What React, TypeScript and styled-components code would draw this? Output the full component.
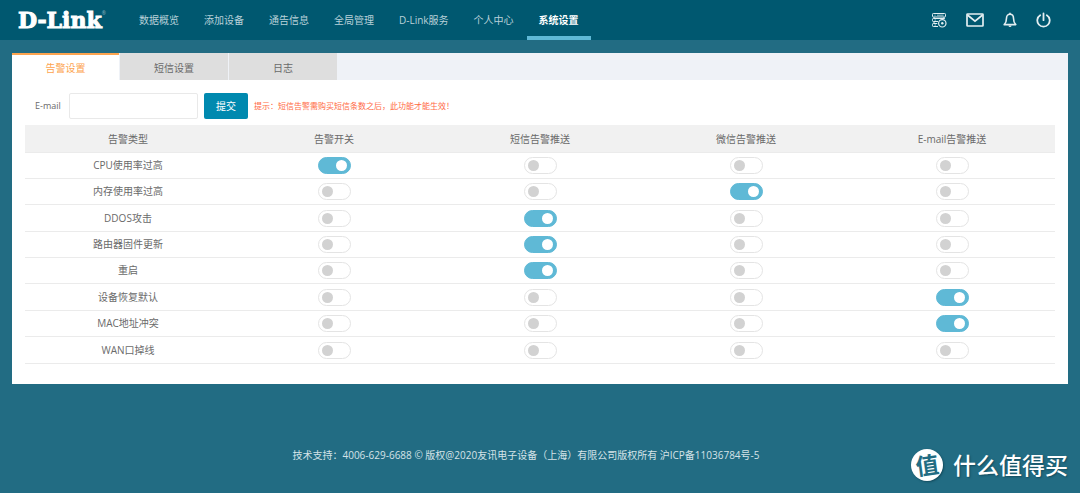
import React, { useState } from "react";
import styled, { createGlobalStyle } from "styled-components";

const GlobalStyle = createGlobalStyle`
  *, *::before, *::after { box-sizing: border-box; }
  body {
    margin: 0;
    background: #226c83;
    color: #6a6a6a;
    font-family: "Open Sans", "Noto Sans CJK SC", sans-serif;
    font-size: 10px;
    line-height: 14px;
  }
  button, input { font: inherit; }
`;

const Page = styled.div`
  display: flex;
  flex-direction: column;
  min-height: 100vh;
`;

const Header = styled.header`
  display: flex;
  align-items: stretch;
  height: 40px;
  padding: 0 29px 0 18px;
  background: #005870;
`;

const Logo = styled.a`
  display: flex;
  align-items: center;
  width: 109px;
  color: #fff;
  font-family: "DejaVu Serif", serif;
  font-size: 22px;
  font-weight: 700;
  line-height: 40px;
  text-decoration: none;
  white-space: nowrap;
  -webkit-text-stroke: 1px #fff;
`;

const Registered = styled.sup`
  align-self: flex-start;
  padding-top: 10px;
  font-family: "Open Sans", sans-serif;
  font-size: 5px;
  font-weight: 400;
  line-height: 6px;
  color: #8fb5c0;
  -webkit-text-stroke: 0;
`;

const Nav = styled.nav`
  display: flex;
  flex: 1;
  gap: 1px;
`;

const NavLink = styled.a<{ $active?: boolean }>`
  padding: 0 12px;
  border-bottom: 4px solid ${(p) => (p.$active ? "#5fb9d6" : "transparent")};
  color: ${(p) => (p.$active ? "#fff" : "#b9d1d9")};
  font-weight: ${(p) => (p.$active ? 600 : 400)};
  line-height: 40px;
  text-decoration: none;
  white-space: nowrap;
`;

const Tools = styled.div`
  display: flex;
  align-items: center;
  gap: 19px;
`;

const ToolButton = styled.button`
  display: flex;
  padding: 0;
  border: 0;
  background: none;
  color: #e3eef1;
  cursor: pointer;
`;

const Panel = styled.main`
  margin: 13px 12px 0;
  padding-bottom: 20px;
  background: #fff;
`;

const Tabs = styled.div`
  display: flex;
  gap: 1px;
  height: 27px;
  background: #eff2f7;
`;

const Tab = styled.button<{ $active?: boolean }>`
  width: ${(p) => (p.$active ? 107 : 108)}px;
  padding: 0;
  border: 0;
  border-top: 2px solid ${(p) => (p.$active ? "#fda44f" : "#dedede")};
  background: ${(p) => (p.$active ? "#fff" : "#dedede")};
  color: ${(p) => (p.$active ? "#fda44f" : "#6a6a6a")};
  line-height: 24px;
  cursor: pointer;
`;

const EmailForm = styled.form`
  display: flex;
  align-items: center;
  padding: 13px 23px 6px;
`;

const EmailLabel = styled.label`
  width: 34px;
  font-size: 9px;
`;

const EmailInput = styled.input`
  width: 129px;
  height: 26px;
  padding: 0 6px;
  border: 1px solid #e9e9e9;
  border-radius: 2px;
  color: #6a6a6a;
`;

const Submit = styled.button`
  width: 44px;
  height: 26px;
  margin: 0 6px;
  padding: 0;
  border: 0;
  border-radius: 2px;
  background: #0089af;
  color: #fff;
  cursor: pointer;
`;

const Hint = styled.span`
  color: #ff6a45;
  font-size: 8px;
`;

const TableWrap = styled.div`
  padding: 0 13px;
`;

const Table = styled.table`
  width: 100%;
  table-layout: fixed;
  border-collapse: separate;
  border-spacing: 0;
  text-align: center;

  th, td {
    padding: 0;
    font-weight: 400;
    border-bottom: 1px solid #ebebeb;
    vertical-align: middle;
  }
  thead th {
    height: 28px;
    background: #f1f1f1;
  }
  tbody th { padding-bottom: 1px; }
  tbody tr { height: 26px; }
  tbody tr:nth-child(3n) { height: 27px; }
  tbody tr:last-child { height: 27px; }
`;

const Switch = styled.input`
  appearance: none;
  display: block;
  width: 33px;
  height: 17px;
  margin: 0 auto;
  border: 1px solid #e4e4e4;
  border-radius: 9px;
  background: #fff;
  cursor: pointer;

  &::before {
    content: "";
    display: block;
    width: 11px;
    height: 11px;
    margin: 2px 3px;
    border-radius: 50%;
    background: #d2d2d2;
  }
  &:checked {
    border-color: #5fb9d6;
    background: #5fb9d6;
  }
  &:checked::before {
    margin-left: 17px;
    background: #fff;
  }
`;

const Footer = styled.footer`
  padding: 64px 28px 0 0;
  color: #d5e3e8;
  text-align: center;
`;

const Watermark = styled.div`
  position: absolute;
  right: 12px;
  bottom: 11px;
  display: flex;
  align-items: center;
  gap: 10px;
  color: #fff;
  font-family: "Noto Sans CJK SC", sans-serif;
  font-size: 23px;
  font-weight: 500;
  line-height: 32px;
  text-shadow: 1px 1px 2px #134b5d;
`;

const WatermarkName = styled.span`
  padding-bottom: 2px;
`;

const Seal = styled.span`
  width: 32px;
  height: 32px;
  border-radius: 50%;
  background: #fff;
  box-shadow: 1px 1px 2px #134b5d;
  color: #226c83;
  font-weight: 700;
  line-height: 30px;
  text-align: center;
  text-shadow: none;
`;

const SealGlyph = styled.span`
  display: block;
  transform: rotate(-8deg);
`;

const NAV = ["数据概览", "添加设备", "通告信息", "全局管理", "D-Link服务", "个人中心", "系统设置"];
const TABS = ["告警设置", "短信设置", "日志"];
const COLUMNS = ["告警开关", "短信告警推送", "微信告警推送", "E-mail告警推送"];
const ALARMS: { name: string; on: number }[] = [
  { name: "CPU使用率过高", on: 0 },
  { name: "内存使用率过高", on: 2 },
  { name: "DDOS攻击", on: 1 },
  { name: "路由器固件更新", on: 1 },
  { name: "重启", on: 1 },
  { name: "设备恢复默认", on: 3 },
  { name: "MAC地址冲突", on: 3 },
  { name: "WAN口掉线", on: -1 },
];

const DevicesIcon = () => (
  <svg width="16" height="16" viewBox="0 0 16 16" fill="none" stroke="currentColor">
    <rect x="1.5" y="1.5" width="13" height="3.5" rx="0.8" />
    <path d="M7 9.5H2.3a.8.8 0 0 1-.8-.8V7.3a.8.8 0 0 1 .8-.8h11.400M7 14.5H2.3a.8.8 0 0 1-.8-.8v-1.400a.8.8 0 0 1 .8-.8h4M3 5v1.500M13 5v2M3 9.500v2" />
    <path d="M3.500 3.200h1M6 3.200h6.500M3.500 8h1.500M3.500 13h1.500" strokeWidth="0.7" />
    <circle cx="11.3" cy="11.3" r="3.7" strokeWidth="1.2" />
    <circle cx="11.3" cy="11.3" r="1.2" fill="currentColor" stroke="none" />
  </svg>
);

const MailIcon = () => (
  <svg width="18" height="14" viewBox="0 0 18 14" fill="none" stroke="currentColor" strokeWidth="1.7">
    <rect x="1" y="1" width="16" height="12" rx="0.6" />
    <path d="M1.500 2L9 8.200 16.500 2" />
  </svg>
);

const BellIcon = () => (
  <svg width="14" height="16" viewBox="0 0 14 16" fill="none" stroke="currentColor" strokeWidth="1.6" strokeLinejoin="round">
    <path d="M7 2.200C4.700 2.200 3.500 4 3.500 6.300c0 3-.5 4.700-2.300 6.300h11.600c-1.800-1.600-2.300-3.300-2.300-6.300C10.500 4 9.300 2.200 7 2.200z" />
    <path d="M7 .8v1.400" />
    <path d="M5.500 13.400a1.500 1.500 0 0 0 3 0z" fill="currentColor" stroke="none" />
  </svg>
);

const PowerIcon = () => (
  <svg width="15" height="16" viewBox="0 0 15 16" fill="none" stroke="currentColor" strokeWidth="1.8" strokeLinecap="round">
    <path d="M4.200 3.200a6.200 6.200 0 1 0 6.600 0M7.500 1.400v6.800" />
  </svg>
);

export default function App() {
  const [state, setState] = useState(() => ALARMS.map((a) => COLUMNS.map((_, c) => c === a.on)));
  const toggle = (r: number, c: number) =>
    setState((s) => s.map((row, i) => (i === r ? row.map((v, j) => (j === c ? !v : v)) : row)));

  return (
    <Page>
      <GlobalStyle />
      <Header>
        <Logo href="#">
          D-Link<Registered>®</Registered>
        </Logo>
        <Nav>
          {NAV.map((label) => (
            <NavLink key={label} href="#" $active={label === "系统设置"}>
              {label}
            </NavLink>
          ))}
        </Nav>
        <Tools>
          <ToolButton aria-label="设备"><DevicesIcon /></ToolButton>
          <ToolButton aria-label="邮件"><MailIcon /></ToolButton>
          <ToolButton aria-label="通知"><BellIcon /></ToolButton>
          <ToolButton aria-label="退出"><PowerIcon /></ToolButton>
        </Tools>
      </Header>

      <Panel>
        <Tabs role="tablist">
          {TABS.map((label, i) => (
            <Tab key={label} type="button" role="tab" aria-selected={i === 0} $active={i === 0}>
              {label}
            </Tab>
          ))}
        </Tabs>
        <EmailForm onSubmit={(e) => e.preventDefault()}>
          <EmailLabel htmlFor="email">E-mail</EmailLabel>
          <EmailInput id="email" type="email" />
          <Submit type="submit">提交</Submit>
          <Hint>提示：短信告警需购买短信条数之后，此功能才能生效！</Hint>
        </EmailForm>
        <TableWrap>
          <Table>
            <thead>
              <tr>
                <th scope="col">告警类型</th>
                {COLUMNS.map((c) => (
                  <th key={c} scope="col">{c}</th>
                ))}
              </tr>
            </thead>
            <tbody>
              {ALARMS.map((alarm, r) => (
                <tr key={alarm.name}>
                  <th scope="row">{alarm.name}</th>
                  {COLUMNS.map((col, c) => (
                    <td key={col}>
                      <Switch
                        type="checkbox"
                        role="switch"
                        aria-label={`${alarm.name} ${col}`}
                        checked={state[r][c]}
                        onChange={() => toggle(r, c)}
                      />
                    </td>
                  ))}
                </tr>
              ))}
            </tbody>
          </Table>
        </TableWrap>
      </Panel>

      <Footer>技术支持：4006-629-6688 © 版权@2020友讯电子设备（上海）有限公司版权所有 沪ICP备11036784号-5</Footer>

      <Watermark>
        <Seal><SealGlyph>值</SealGlyph></Seal>
        <WatermarkName>什么值得买</WatermarkName>
      </Watermark>
    </Page>
  );
}
